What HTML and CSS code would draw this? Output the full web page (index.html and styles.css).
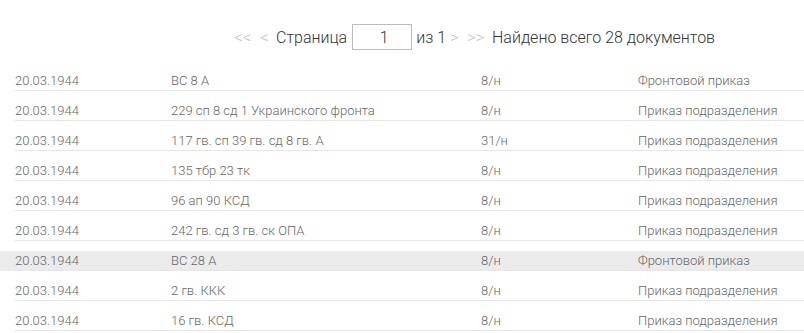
FILE: index.html
```html
<!DOCTYPE html>
<html lang="ru">
<head>
<meta charset="utf-8">
<link rel="stylesheet" href="styles.css">
</head>
<body>
<div class="pager">
  <span class="nav dbl">&lt;&lt;</span>
  <span class="nav sgl">&lt;</span>
  <span class="lbl">Страница</span>
  <input class="page-input" type="text" value="1">
  <span class="lbl">из 1</span>
  <span class="nav sgl-r">&gt;</span>
  <span class="nav dbl-r">&gt;&gt;</span>
  <span class="lbl">Найдено всего 28 документов</span>
</div>
<div class="list">
  <div class="row"><div class="cells"><span class="c1">20.03.1944</span><span class="c2">ВС 8 А</span><span class="c3">8/н</span><span class="c4">Фронтовой приказ</span></div></div>
  <div class="row"><div class="cells"><span class="c1">20.03.1944</span><span class="c2">229 сп 8 сд 1 Украинского фронта</span><span class="c3">8/н</span><span class="c4">Приказ подразделения</span></div></div>
  <div class="row"><div class="cells"><span class="c1">20.03.1944</span><span class="c2">117 гв. сп 39 гв. сд 8 гв. А</span><span class="c3">31/н</span><span class="c4">Приказ подразделения</span></div></div>
  <div class="row"><div class="cells"><span class="c1">20.03.1944</span><span class="c2">135 тбр 23 тк</span><span class="c3">8/н</span><span class="c4">Приказ подразделения</span></div></div>
  <div class="row"><div class="cells"><span class="c1">20.03.1944</span><span class="c2">96 ап 90 КСД</span><span class="c3">8/н</span><span class="c4">Приказ подразделения</span></div></div>
  <div class="row"><div class="cells"><span class="c1">20.03.1944</span><span class="c2">242 гв. сд 3 гв. ск ОПА</span><span class="c3">8/н</span><span class="c4">Приказ подразделения</span></div></div>
  <div class="row hl"><div class="cells"><span class="c1">20.03.1944</span><span class="c2">ВС 28 А</span><span class="c3">8/н</span><span class="c4">Фронтовой приказ</span></div></div>
  <div class="row"><div class="cells"><span class="c1">20.03.1944</span><span class="c2">2 гв. ККК</span><span class="c3">8/н</span><span class="c4">Приказ подразделения</span></div></div>
  <div class="row"><div class="cells"><span class="c1">20.03.1944</span><span class="c2">16 гв. КСД</span><span class="c3">8/н</span><span class="c4">Приказ подразделения</span></div></div>
</div>
</body>
</html>
```

FILE: styles.css
```css
html, body {
  margin: 0;
  padding: 0;
  background: #fff;
}
body {
  font-family: Roboto, "Liberation Sans", sans-serif;
  font-weight: 300;
  overflow: hidden;
}
.pager {
  display: flex;
  align-items: center;
  height: 26px;
  margin-top: 24px;
  padding-left: 234px;
  font-size: 16px;
  color: #333;
}
.nav {
  flex: none;
  font-size: 17px;
  color: #c4c4c4;
}
.dbl { width: 26px; }
.sgl { width: 16px; }
.sgl-r { width: 17px; }
.dbl-r { width: 25px; }
.lbl {
  margin-right: 4px;
}
.page-input {
  box-sizing: border-box;
  width: 60px;
  height: 26px;
  margin: 0 4px 0 1px;
  border: 1px solid #bcbcbc;
  padding: 0 0 0 4px;
  font: 300 16px Roboto, "Liberation Sans", sans-serif;
  color: #333;
  text-align: center;
  outline: none;
}
.list {
  margin-top: 21px;
}
.row {
  height: 20px;
  margin-top: 10px;
}
.row.hl {
  background: #ebebeb;
}
.cells {
  box-sizing: border-box;
  height: 20px;
  margin-left: 15px;
  border-bottom: 1px solid #e6e6e6;
  display: grid;
  grid-template-columns: 156px 310px 157px 1fr;
  font-size: 13px;
  line-height: 19px;
  color: #666;
  white-space: nowrap;
}
```
